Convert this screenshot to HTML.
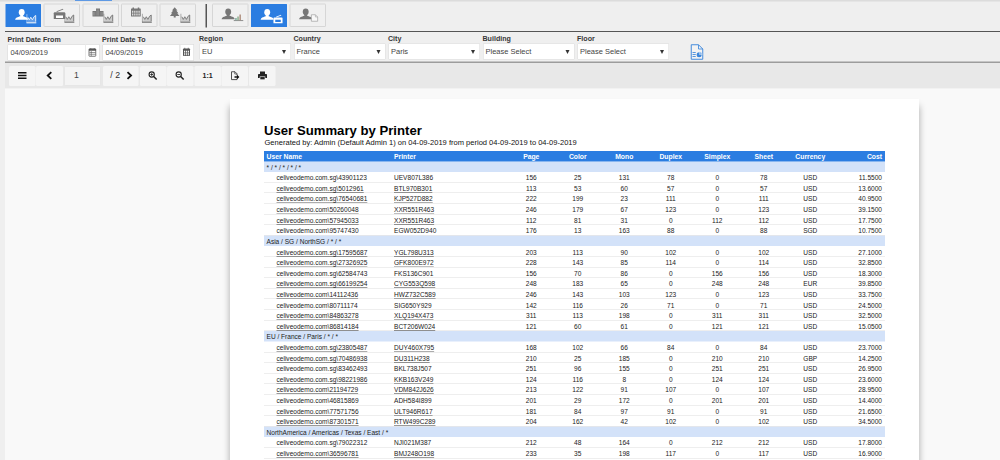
<!DOCTYPE html>
<html><head><meta charset="utf-8"><title>User Summary by Printer</title>
<style>
html,body{margin:0;padding:0;background:#efefef;overflow:hidden;}
body{width:1000px;height:460px;position:relative;font-family:"Liberation Sans",Arial,sans-serif;}
#s{position:absolute;left:0;top:0;width:2000px;height:920px;transform:scale(.5);transform-origin:0 0;background:#efefef;overflow:hidden;color:#222;}
#s *{box-sizing:border-box;}
.abs{position:absolute;}
.topstrip{left:0;top:0;width:2000px;height:2.6px;background:#dcdcdc;}
.topbar{left:150px;top:0;width:74px;height:2px;background:#5e99e4;}
.tab{position:absolute;top:7.4px;width:73px;height:46.6px;background:#f0f0f0;border-radius:2px;}
.tab:before{content:"";position:absolute;left:0;top:0;right:0;bottom:0;border:2px solid #d6d6d6;border-radius:2px;}
.tab.on:before{display:none;}
.tab.on{background:#2b7de1;box-shadow:none;border-radius:1px;width:71.6px;top:8px;height:46px;}
.tab svg{position:absolute;left:0;top:0;}
.vsep{left:410.5px;top:8px;width:3px;height:47px;background:#555;}
.hline1{left:10px;top:61.7px;width:1990px;height:2.4px;background:#555;}
.hline2{left:10px;top:123.4px;width:1990px;height:2.6px;background:#9c9c9c;}
.lbl{position:absolute;top:67.4px;font-weight:bold;font-size:14.2px;line-height:20px;color:#383838;white-space:nowrap;}
.inp{position:absolute;top:88.8px;height:32px;background:#fff;border:1.4px solid #d2d2d2;font-size:15px;line-height:28px;color:#444;padding-left:4.8px;white-space:nowrap;}
.cal{position:absolute;top:88.8px;height:32px;width:28px;background:#fff;border:1.4px solid #d2d2d2;border-left:1px solid #e4e4e4;}
.sel{position:absolute;top:87.4px;height:32px;width:183px;background:#fff;border:1.4px solid #d6d6d6;font-size:15px;line-height:28px;color:#444;padding-left:4.5px;white-space:nowrap;}
.sel:after{content:"";position:absolute;right:9px;top:12px;border-left:4.5px solid transparent;border-right:4.5px solid transparent;border-top:8px solid #333;}
.tbar{left:10.4px;top:126px;width:1990px;height:51px;background:#e8e8e8;}
.view{left:10.4px;top:177px;width:1990px;height:743px;background:#f9f9f9;}
.tb{position:absolute;top:132px;height:40px;width:53px;background:#f5f5f5;border-radius:3px;}
.tb svg{position:absolute;left:0;top:0;}
.paper{left:460px;top:198.2px;width:1378px;height:800px;background:#fff;box-shadow:0 14px 14px rgba(0,0,0,.33);}
.title{left:528px;top:245px;font-weight:bold;font-size:26.3px;line-height:30px;color:#000;white-space:nowrap;}
.sub{left:529px;top:274.6px;font-size:15.08px;line-height:18px;color:#111;white-space:nowrap;}
.tbl{left:528px;top:302px;width:1242px;font-size:13.14px;color:#222;}
.h{height:20.6px;background:#2b7de1;color:#fff;font-weight:bold;font-size:13.6px;line-height:20.6px;white-space:nowrap;position:relative;}
.g{height:21.22px;background:#d3e2f9;line-height:24px;padding-left:5px;white-space:nowrap;overflow:hidden;}
.r{height:21.22px;line-height:20.2px;border-bottom:1.5px solid #ddd;white-space:nowrap;position:relative;}
.h span,.r span{position:absolute;top:2.2px;display:block;}
.u{left:25px;}
.p{left:260px;}
.h .u{left:5px;}
.n{width:93px;text-align:center;}
.n:nth-child(3){left:488px}.n:nth-child(4){left:581px}.n:nth-child(5){left:674px}.n:nth-child(6){left:767px}.n:nth-child(7){left:860px}.n:nth-child(8){left:953px}.n:nth-child(9){left:1046px}
.c{right:6px;text-align:right;}
.r a{text-decoration:underline;text-decoration-thickness:1.4px;text-underline-offset:2.6px;}
.l0 a{text-decoration:none;}
.l1 a{text-decoration-color:rgba(0,0,0,.5);}
.l2 a{text-decoration-color:rgba(0,0,0,.65);}
.l3 a{text-decoration-color:rgba(0,0,0,.8);}
</style></head><body>
<div id="s">
<div class="abs topstrip"></div><div class="abs topbar"></div>


<div class="tab on" style="left:10.6px"><svg width="73" height="46" viewBox="0 0 73 46" fill="#fff" color="#fff"><g><ellipse cx="32.4" cy="16.6" rx="5.9" ry="6.8"/><rect x="29.6" y="20" width="5.600" height="6"/><path d="M19.300 31.700c0-4.600 5.200-5.400 10-7.400h6.200c4.800 2 10 2.800 10 7.400z"/></g><g transform="translate(0 .9)" opacity=".9"><path d="M42.800 19.500v17" fill="none" stroke="currentColor" stroke-width="1.500" opacity=".75"/><rect x="42" y="35" width="19.600" height="3" opacity=".8"/><path d="M44.500 35.500v-9.500l3 5 3-5.200 3.200 5.200 3.300-6 3.400-2.500v13z" opacity=".3"/><path d="M44.600 25.500l3 5.300 3-5.300 3.200 5.300 3.300-6.300 3.300-2.500v12.500" fill="none" stroke="currentColor" stroke-width="1.900" stroke-linejoin="round"/></g></svg></div>
<div class="tab" style="left:87.1px"><svg width="73" height="46" viewBox="0 0 73 46" fill="#777" color="#777"><path d="M22.500 17.500h19a2 2 0 0 1 2 2v11.500h-23v-11.500a2 2 0 0 1 2-2z"/><path d="M26 15.500l13-5 .7 1.700-13 5z"/><rect x="25" y="24" width="14" height="5" fill="#fff"/><g transform="translate(0 1)"><path d="M42.800 19.500v17" fill="none" stroke="currentColor" stroke-width="1.500" opacity=".75"/><rect x="42" y="35" width="19.600" height="3" opacity=".8"/><path d="M44.500 35.500v-9.500l3 5 3-5.200 3.200 5.200 3.300-6 3.400-2.500v13z" opacity=".3"/><path d="M44.600 25.500l3 5.300 3-5.300 3.200 5.300 3.300-6.300 3.300-2.500v12.500" fill="none" stroke="currentColor" stroke-width="1.900" stroke-linejoin="round"/></g></svg></div>
<div class="tab" style="left:164.6px"><svg width="73" height="46" viewBox="0 0 73 46" fill="#777" color="#777"><rect x="20" y="15" width="7" height="11"/><rect x="27" y="10" width="8" height="16"/><rect x="35" y="15" width="7" height="11"/><path d="M29 12v12M31.500 12v12M22 17v7M24.500 17v7M37 17v7M39.500 17v7" stroke="#aaa" stroke-width="1"/><g transform="translate(0 1)"><path d="M42.800 19.500v17" fill="none" stroke="currentColor" stroke-width="1.500" opacity=".75"/><rect x="42" y="35" width="19.600" height="3" opacity=".8"/><path d="M44.500 35.500v-9.500l3 5 3-5.200 3.200 5.200 3.300-6 3.400-2.500v13z" opacity=".3"/><path d="M44.600 25.500l3 5.300 3-5.300 3.200 5.300 3.300-6.300 3.300-2.500v12.500" fill="none" stroke="currentColor" stroke-width="1.900" stroke-linejoin="round"/></g></svg></div>
<div class="tab" style="left:242.2px"><svg width="73" height="46" viewBox="0 0 73 46" fill="#777" color="#777"><rect x="20" y="10" width="19.500" height="16" rx="1"/><rect x="23" y="8" width="3" height="4"/><rect x="33.500" y="8" width="3" height="4"/><g fill="#ddd"><rect x="22" y="14.500" width="2.600" height="4"/><rect x="26.300" y="14.500" width="2.600" height="4"/><rect x="30.600" y="14.500" width="2.600" height="4"/><rect x="34.900" y="14.500" width="2.600" height="4"/><rect x="22" y="20" width="2.600" height="4"/><rect x="26.300" y="20" width="2.600" height="4"/><rect x="30.600" y="20" width="2.600" height="4"/><rect x="34.900" y="20" width="2.600" height="4"/></g><g transform="translate(0 1)"><path d="M42.800 19.500v17" fill="none" stroke="currentColor" stroke-width="1.500" opacity=".75"/><rect x="42" y="35" width="19.600" height="3" opacity=".8"/><path d="M44.500 35.500v-9.500l3 5 3-5.200 3.200 5.200 3.300-6 3.400-2.500v13z" opacity=".3"/><path d="M44.600 25.500l3 5.300 3-5.300 3.200 5.300 3.300-6.300 3.300-2.500v12.500" fill="none" stroke="currentColor" stroke-width="1.900" stroke-linejoin="round"/></g></svg></div>
<div class="tab" style="left:319.4px"><svg width="73" height="46" viewBox="0 0 73 46" fill="#777" color="#777"><path d="M30.400 7.500l5.500 6.500h-2.500l4.500 5.500h-2.500l4.500 5.500h-7.500v3h-4v-3h-7.500l4.500-5.500h-2.500l4.500-5.500h-2.500z"/><g transform="translate(0 1)"><path d="M42.800 19.500v17" fill="none" stroke="currentColor" stroke-width="1.500" opacity=".75"/><rect x="42" y="35" width="19.600" height="3" opacity=".8"/><path d="M44.500 35.500v-9.500l3 5 3-5.200 3.200 5.200 3.300-6 3.400-2.500v13z" opacity=".3"/><path d="M44.600 25.500l3 5.300 3-5.300 3.200 5.300 3.300-6.300 3.300-2.500v12.500" fill="none" stroke="currentColor" stroke-width="1.900" stroke-linejoin="round"/></g></svg></div>
<div class="abs vsep"></div>
<div class="tab" style="left:424.400px"><svg width="73" height="46" viewBox="0 0 73 46" fill="#777" color="#777"><g><ellipse cx="32.4" cy="16.6" rx="5.9" ry="6.8"/><rect x="29.6" y="20" width="5.600" height="6"/><path d="M19.300 31.700c0-4.600 5.200-5.400 10-7.400h6.200c4.800 2 10 2.800 10 7.400z"/></g><rect x="43.500" y="33.500" width="19" height="1.600"/><rect x="46.500" y="29" width="2.800" height="4.500" fill="#7a9"/><rect x="50.700" y="26" width="2.800" height="7.500" fill="#8a8"/><rect x="54.900" y="22" width="2.800" height="11.500" fill="#a87"/></svg></div>
<div class="tab on" style="left:502px"><svg width="73" height="46" viewBox="0 0 73 46" fill="#fff" color="#fff"><g><ellipse cx="32.4" cy="16.6" rx="5.9" ry="6.8"/><rect x="29.6" y="20" width="5.600" height="6"/><path d="M19.300 31.700c0-4.600 5.200-5.400 10-7.400h6.200c4.800 2 10 2.800 10 7.400z"/></g><path d="M46.500 27h15a1.600 1.600 0 0 1 1.600 1.600v10h-18.200v-10a1.600 1.600 0 0 1 1.600-1.600z"/><path d="M50 25.500l10-3.800 .6 1.500-10 3.800z"/><rect x="48.500" y="31.500" width="11" height="4.500" fill="#2b7de1"/></svg></div>
<div class="tab" style="left:578.600px"><svg width="73" height="46" viewBox="0 0 73 46" fill="#777" color="#777"><g><ellipse cx="32.4" cy="16.6" rx="5.9" ry="6.8"/><rect x="29.6" y="20" width="5.600" height="6"/><path d="M19.300 31.700c0-4.600 5.200-5.400 10-7.400h6.200c4.800 2 10 2.800 10 7.400z"/></g><path d="M43.800 22.500h8l4.500 4.500v8.500h-12.500z" fill="#f8f8f8" stroke="#999" stroke-width="1.300"/><path d="M51.800 22.500v4.500h4.500" fill="none" stroke="#999" stroke-width="1"/></svg></div>

<div class="abs hline1"></div>

<div class="lbl" style="left:15px;top:68px">Print Date From</div>
<div class="lbl" style="left:204px;top:68px">Print Date To</div>
<div class="lbl" style="left:398px">Region</div>
<div class="lbl" style="left:587px">Country</div>
<div class="lbl" style="left:776px">City</div>
<div class="lbl" style="left:965px">Building</div>
<div class="lbl" style="left:1154px">Floor</div>

<div class="inp" style="left:15px;width:156px">04/09/2019</div>
<div class="cal" style="left:171px"><svg width="26" height="30" viewBox="0 0 26 30"><rect x="6" y="7.500" width="13.500" height="15" rx="1" fill="none" stroke="#555" stroke-width="1.600"/><rect x="6" y="8" width="14" height="3.500" fill="#555"/><path d="M7 15h12M7 18.500h12M10.500 12v10" stroke="#555" stroke-width="1.200" fill="none"/><path d="M9.500 6.500v3M16.500 6.500v3" stroke="#555" stroke-width="1.400"/></svg></div>
<div class="inp" style="left:205px;width:155px">04/09/2019</div>
<div class="cal" style="left:360px"><svg width="26" height="30" viewBox="0 0 26 30"><rect x="5" y="7" width="14" height="15" rx="1.500" fill="#555"/><g fill="#fff"><rect x="7" y="11.500" width="2.400" height="2.400"/><rect x="10.800" y="11.500" width="2.400" height="2.400"/><rect x="14.600" y="11.500" width="2.400" height="2.400"/><rect x="7" y="15" width="2.400" height="2.400"/><rect x="10.800" y="15" width="2.400" height="2.400"/><rect x="14.600" y="15" width="2.400" height="2.400"/><rect x="7" y="18.500" width="2.400" height="2"/><rect x="10.800" y="18.500" width="2.400" height="2"/><rect x="14.600" y="18.500" width="2.400" height="2"/></g><path d="M8.500 5.500v3M15.500 5.500v3" stroke="#555" stroke-width="1.400"/></svg></div>

<div class="sel" style="left:398.500px">EU</div>
<div class="sel" style="left:587.500px">France</div>
<div class="sel" style="left:776.500px">Paris</div>
<div class="sel" style="left:965.500px">Please Select</div>
<div class="sel" style="left:1154.500px">Please Select</div>

<svg class="abs" style="left:1378px;top:86px" width="32" height="36" viewBox="0 0 32 36"><path d="M4.500 3.500h14.500l8.500 8.500v20.500H4.500z" fill="#f3f3f3" stroke="#3c86db" stroke-width="1.900" stroke-linejoin="round"/><path d="M19 3.500v8.500h8.500" fill="none" stroke="#3c86db" stroke-width="1.700"/><path d="M7 19h6.500M7 23h6.500M7 27h6.500" stroke="#3c86db" stroke-width="1.700"/><circle cx="20.300" cy="23.500" r="5" fill="#3c86db"/><path d="M20.800 23v-5.500a5.500 5.500 0 0 1 5.500 5.500z" fill="#8fbbee" stroke="#f3f3f3" stroke-width=".8"/></svg>

<div class="abs hline2"></div>
<div class="abs tbar"></div>
<div class="abs view"></div>

<div class="tb" style="left:17.600px"><svg width="53" height="40" viewBox="0 0 53 40"><path d="M18 13.600h17M18 19h17M18 24.400h17" stroke="#111" stroke-width="3.200"/></svg></div>
<div class="tb" style="left:72px;width:54.400px"><svg width="54" height="40" viewBox="0 0 54 40"><path d="M30.600 12.200L23.400 19l7.200 6.800" fill="none" stroke="#111" stroke-width="3.600"/></svg></div>
<div class="tb" style="left:128.200px;width:74.200px;background:#f4f4f4;border:2px solid #e6e6e6;font-size:17.500px;line-height:33px;color:#444;padding-left:18px">1</div>
<div class="tb" style="left:205.600px;width:71.200px;font-size:17.500px;line-height:37px;color:#333;padding-left:15px">/ 2<svg style="left:38px" width="33" height="40" viewBox="0 0 33 40"><path d="M11 12.200L18.200 19 11 25.800" fill="none" stroke="#111" stroke-width="3.600"/></svg></div>
<div class="tb" style="left:279.600px"><svg width="53" height="40" viewBox="0 0 53 40"><circle cx="23.400" cy="17" r="5.200" fill="none" stroke="#222" stroke-width="2.200"/><path d="M27.300 21l6 6" stroke="#222" stroke-width="3"/><path d="M20.600 17h5.600M23.400 14.200v5.600" stroke="#222" stroke-width="1.700"/></svg></div>
<div class="tb" style="left:334px"><svg width="53" height="40" viewBox="0 0 53 40"><circle cx="23.400" cy="17" r="5.200" fill="none" stroke="#222" stroke-width="2.200"/><path d="M27.300 21l6 6" stroke="#222" stroke-width="3"/><path d="M20.600 17h5.600" stroke="#222" stroke-width="1.700"/></svg></div>
<div class="tb" style="left:388.600px;font-weight:bold;font-size:14px;line-height:38.500px;text-align:center;color:#222">1:1</div>
<div class="tb" style="left:443.400px"><svg width="53" height="40" viewBox="0 0 53 40"><path d="M20 11.500h7l4 4v3.500M31 24.500v2.700H20V11.500" fill="none" stroke="#333" stroke-width="1.700"/><path d="M26.500 11.500v4.500h4.500" fill="none" stroke="#333" stroke-width="1.300"/><path d="M26 20.500h5v-2.800l4.800 4.300-4.800 4.300v-2.800h-5z" fill="#111"/></svg></div>
<div class="tb" style="left:498.200px"><svg width="53" height="40" viewBox="0 0 53 40"><rect x="22" y="11" width="10" height="5" fill="#222"/><path d="M19.500 16h15a1.500 1.500 0 0 1 1.500 1.500v6.500h-18v-6.500a1.500 1.500 0 0 1 1.500-1.500z" fill="#222"/><rect x="22" y="21.500" width="10" height="6" fill="#222" stroke="#f5f5f5" stroke-width="1.200"/></svg></div>

<div class="abs paper"></div>
<div class="abs title">User Summary by Printer</div>
<div class="abs sub">Generated by: Admin (Default Admin 1) on 04-09-2019 from period 04-09-2019 to 04-09-2019</div>
<div class="abs tbl">
<div class="h"><span class="u">User Name</span><span class="p">Printer</span><span class="n">Page</span><span class="n">Color</span><span class="n">Mono</span><span class="n">Duplex</span><span class="n">Simplex</span><span class="n">Sheet</span><span class="n">Currency</span><span class="c">Cost</span></div>
<div class="g"><span>* / * / * / * / *</span></div>
<div class="r l0"><span class="u"><a>celiveodemo.com.sg\43901123</a></span><span class="p"><a>UEV807L386</a></span><span class="n">156</span><span class="n">25</span><span class="n">131</span><span class="n">78</span><span class="n">0</span><span class="n">78</span><span class="n">USD</span><span class="c">11.5500</span></div>
<div class="r l3"><span class="u"><a>celiveodemo.com.sg\5012961</a></span><span class="p"><a>BTL970B301</a></span><span class="n">113</span><span class="n">53</span><span class="n">60</span><span class="n">57</span><span class="n">0</span><span class="n">57</span><span class="n">USD</span><span class="c">13.6000</span></div>
<div class="r l2"><span class="u"><a>celiveodemo.com.sg\76540681</a></span><span class="p"><a>KJP527D882</a></span><span class="n">222</span><span class="n">199</span><span class="n">23</span><span class="n">111</span><span class="n">0</span><span class="n">111</span><span class="n">USD</span><span class="c">40.9500</span></div>
<div class="r l1"><span class="u"><a>celiveodemo.com\50260048</a></span><span class="p"><a>XXR551R463</a></span><span class="n">246</span><span class="n">179</span><span class="n">67</span><span class="n">123</span><span class="n">0</span><span class="n">123</span><span class="n">USD</span><span class="c">39.1500</span></div>
<div class="r l3"><span class="u"><a>celiveodemo.com\57945033</a></span><span class="p"><a>XXR551R463</a></span><span class="n">112</span><span class="n">81</span><span class="n">31</span><span class="n">0</span><span class="n">112</span><span class="n">112</span><span class="n">USD</span><span class="c">17.7500</span></div>
<div class="r l0"><span class="u"><a>celiveodemo.com\95747430</a></span><span class="p"><a>EGW052D940</a></span><span class="n">176</span><span class="n">13</span><span class="n">163</span><span class="n">88</span><span class="n">0</span><span class="n">88</span><span class="n">SGD</span><span class="c">10.7500</span></div>
<div class="g"><span>Asia / SG / NorthSG / * / *</span></div>
<div class="r l3"><span class="u"><a>celiveodemo.com.sg\17595687</a></span><span class="p"><a>YGL798U313</a></span><span class="n">203</span><span class="n">113</span><span class="n">90</span><span class="n">102</span><span class="n">0</span><span class="n">102</span><span class="n">USD</span><span class="c">27.1000</span></div>
<div class="r l1"><span class="u"><a>celiveodemo.com.sg\27326925</a></span><span class="p"><a>GFK800E972</a></span><span class="n">228</span><span class="n">143</span><span class="n">85</span><span class="n">114</span><span class="n">0</span><span class="n">114</span><span class="n">USD</span><span class="c">32.8500</span></div>
<div class="r l0"><span class="u"><a>celiveodemo.com.sg\62584743</a></span><span class="p"><a>FKS136C901</a></span><span class="n">156</span><span class="n">70</span><span class="n">86</span><span class="n">0</span><span class="n">156</span><span class="n">156</span><span class="n">USD</span><span class="c">18.3000</span></div>
<div class="r l3"><span class="u"><a>celiveodemo.com.sg\66199254</a></span><span class="p"><a>CYG553Q598</a></span><span class="n">248</span><span class="n">183</span><span class="n">65</span><span class="n">0</span><span class="n">248</span><span class="n">248</span><span class="n">EUR</span><span class="c">39.8500</span></div>
<div class="r l2"><span class="u"><a>celiveodemo.com\14112436</a></span><span class="p"><a>HWZ732C589</a></span><span class="n">246</span><span class="n">143</span><span class="n">103</span><span class="n">123</span><span class="n">0</span><span class="n">123</span><span class="n">USD</span><span class="c">33.7500</span></div>
<div class="r l0"><span class="u"><a>celiveodemo.com\80711174</a></span><span class="p"><a>SIG650Y929</a></span><span class="n">142</span><span class="n">116</span><span class="n">26</span><span class="n">71</span><span class="n">0</span><span class="n">71</span><span class="n">USD</span><span class="c">24.5000</span></div>
<div class="r l2"><span class="u"><a>celiveodemo.com\84863278</a></span><span class="p"><a>XLQ194X473</a></span><span class="n">311</span><span class="n">113</span><span class="n">198</span><span class="n">0</span><span class="n">311</span><span class="n">311</span><span class="n">USD</span><span class="c">32.5000</span></div>
<div class="r l3"><span class="u"><a>celiveodemo.com\86814184</a></span><span class="p"><a>BCT206W024</a></span><span class="n">121</span><span class="n">60</span><span class="n">61</span><span class="n">0</span><span class="n">121</span><span class="n">121</span><span class="n">USD</span><span class="c">15.0500</span></div>
<div class="g"><span>EU / France / Paris / * / *</span></div>
<div class="r l2"><span class="u"><a>celiveodemo.com.sg\23805487</a></span><span class="p"><a>DUY460X795</a></span><span class="n">168</span><span class="n">102</span><span class="n">66</span><span class="n">84</span><span class="n">0</span><span class="n">84</span><span class="n">USD</span><span class="c">23.7000</span></div>
<div class="r l3"><span class="u"><a>celiveodemo.com.sg\70486938</a></span><span class="p"><a>DU311H238</a></span><span class="n">210</span><span class="n">25</span><span class="n">185</span><span class="n">0</span><span class="n">210</span><span class="n">210</span><span class="n">GBP</span><span class="c">14.2500</span></div>
<div class="r l0"><span class="u"><a>celiveodemo.com.sg\83462493</a></span><span class="p"><a>BKL738J507</a></span><span class="n">251</span><span class="n">96</span><span class="n">155</span><span class="n">0</span><span class="n">251</span><span class="n">251</span><span class="n">USD</span><span class="c">26.9500</span></div>
<div class="r l2"><span class="u"><a>celiveodemo.com.sg\98221986</a></span><span class="p"><a>KKB163V249</a></span><span class="n">124</span><span class="n">116</span><span class="n">8</span><span class="n">0</span><span class="n">124</span><span class="n">124</span><span class="n">USD</span><span class="c">23.6000</span></div>
<div class="r l3"><span class="u"><a>celiveodemo.com\21194729</a></span><span class="p"><a>VDM842J626</a></span><span class="n">213</span><span class="n">122</span><span class="n">91</span><span class="n">107</span><span class="n">0</span><span class="n">107</span><span class="n">USD</span><span class="c">28.9500</span></div>
<div class="r l0"><span class="u"><a>celiveodemo.com\46815869</a></span><span class="p"><a>ADH584I899</a></span><span class="n">201</span><span class="n">29</span><span class="n">172</span><span class="n">0</span><span class="n">201</span><span class="n">201</span><span class="n">USD</span><span class="c">14.4000</span></div>
<div class="r l2"><span class="u"><a>celiveodemo.com\77571756</a></span><span class="p"><a>ULT946R617</a></span><span class="n">181</span><span class="n">84</span><span class="n">97</span><span class="n">91</span><span class="n">0</span><span class="n">91</span><span class="n">USD</span><span class="c">21.6500</span></div>
<div class="r l3"><span class="u"><a>celiveodemo.com\87301571</a></span><span class="p"><a>RTW499C289</a></span><span class="n">204</span><span class="n">162</span><span class="n">42</span><span class="n">102</span><span class="n">0</span><span class="n">102</span><span class="n">USD</span><span class="c">34.5000</span></div>
<div class="g"><span>NorthAmerica / Americas / Texas / East / *</span></div>
<div class="r l0"><span class="u"><a>celiveodemo.com.sg\79022312</a></span><span class="p"><a>NJI021M387</a></span><span class="n">212</span><span class="n">48</span><span class="n">164</span><span class="n">0</span><span class="n">212</span><span class="n">212</span><span class="n">USD</span><span class="c">17.8000</span></div>
<div class="r l3"><span class="u"><a>celiveodemo.com\36596781</a></span><span class="p"><a>BMJ248O198</a></span><span class="n">233</span><span class="n">35</span><span class="n">198</span><span class="n">117</span><span class="n">0</span><span class="n">117</span><span class="n">USD</span><span class="c">16.9000</span></div>
</div>
</div>
</body></html>
